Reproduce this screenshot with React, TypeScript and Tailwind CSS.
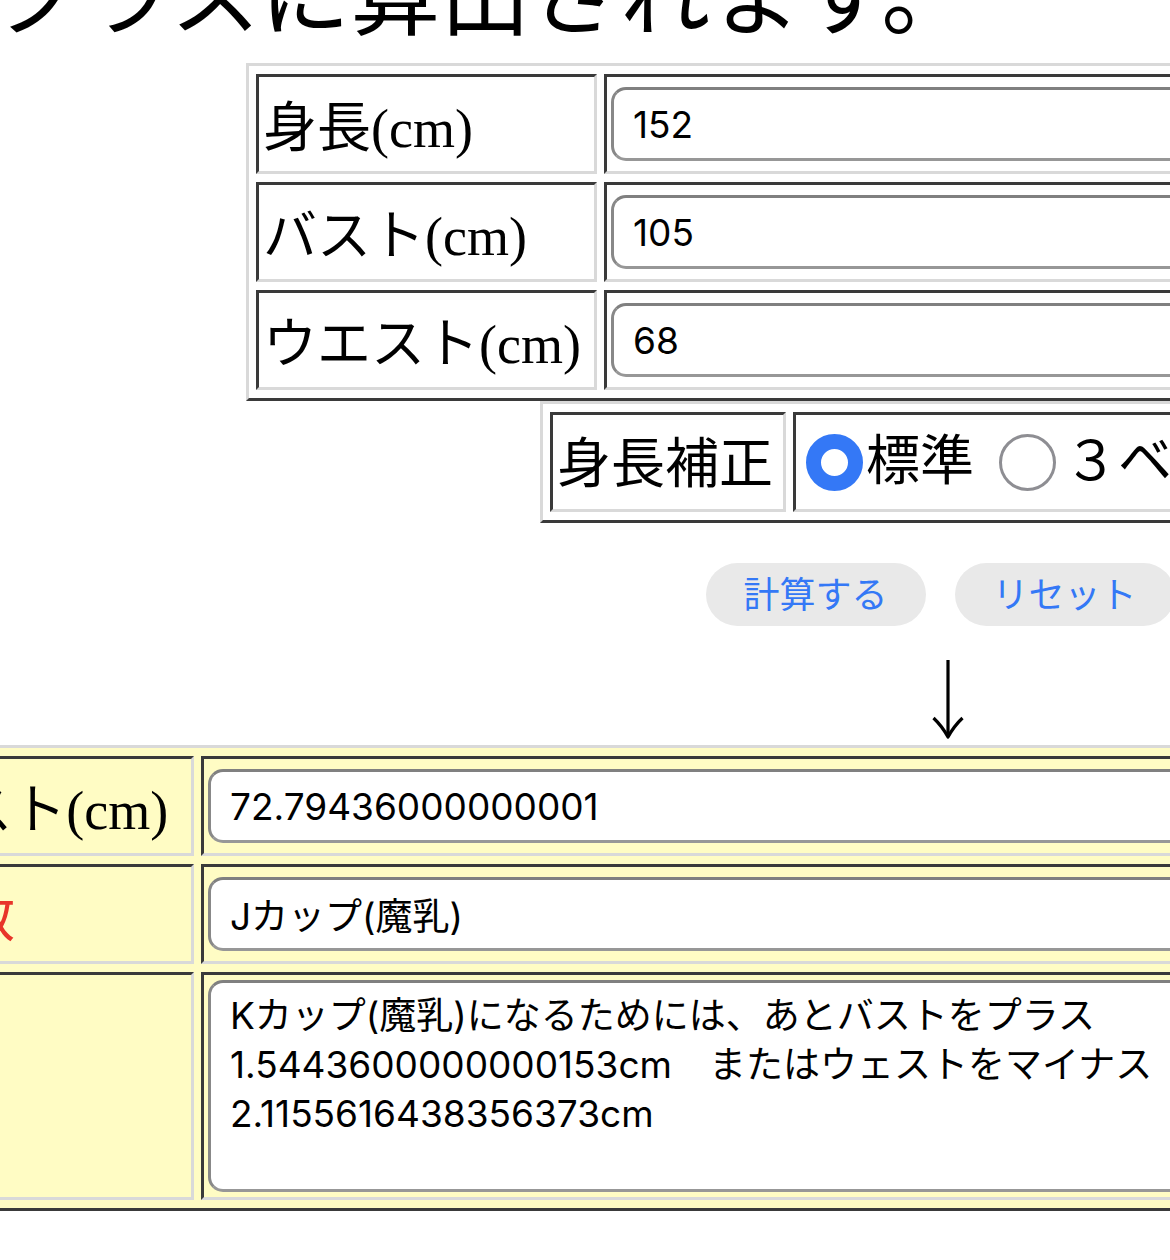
import React from "react";

const serif = "font-['Liberation_Serif','Noto_Sans_CJK_JP',serif]";
const sans = "font-['Inter','Noto_Sans_CJK_JP',sans-serif]";

// old-school table border="1" look: outset frame, inset cells
const frame =
  "table-fixed border-separate border-spacing-x-[7px] border-spacing-y-[8px] border-[3px] border-t-[#d9d9d9] border-l-[#d9d9d9] border-r-[#3a3a3a] border-b-[#3a3a3a]";
const cell =
  "border-[3px] border-t-[#3a3a3a] border-l-[#3a3a3a] border-r-[#d9d9d9] border-b-[#d9d9d9] p-[4px] align-middle";
const labelCell = "whitespace-nowrap pt-[13px] text-[54px] leading-none";
const field =
  "block w-full rounded-[15px] border-[3px] border-[#979797] border-t-[#808080] border-l-[#888888] bg-white pl-[19px] text-[37px] text-black outline-none";

const inputs = [
  ["身長(cm)", "152"],
  ["バスト(cm)", "105"],
  ["ウエスト(cm)", "68"],
];

const advice =
  "Kカップ(魔乳)になるためには、あとバストをプラス\n1.5443600000000153cm　またはウェストをマイナス\n2.1155616438356373cm";

export default function App() {
  return (
    <div className="relative h-[1260px] w-[1170px] overflow-hidden bg-white text-black">
      <div className="flex w-[1880px] flex-col items-center">
        {/* heading, only its last line is in view */}
        <p className={`-ml-[8px] -mt-[47px] self-start whitespace-nowrap text-[90px] leading-[90px] ${serif}`}>
          クラスに算出されます。
        </p>

        {/* Inputs */}
        <table className={`${frame} mt-[20px] w-[1388px] bg-white`}>
          <tbody>
            {inputs.map(([label, value]) => (
              <tr key={label}>
                <td className={`${cell} ${labelCell} h-[100px] w-[341px] ${serif}`}>{label}</td>
                <td className={`${cell} h-[100px]`}>
                  <input readOnly value={value} className={`${field} h-[74px] ${sans}`} />
                </td>
              </tr>
            ))}
          </tbody>
        </table>

        {/* Height correction */}
        <table className={`${frame} w-[800px] bg-white`}>
          <tbody>
            <tr>
              <td className={`${cell} h-[100px] w-[236px] whitespace-nowrap pt-[10px] text-[54px] leading-none ${serif}`}>
                身長補正
              </td>
              <td className={`${cell} h-[100px]`}>
                <div className={`flex items-center whitespace-nowrap text-[54px] leading-none ${serif}`}>
                  <span className="ml-[6px] mr-[3px] h-[57px] w-[57px] shrink-0 rounded-full border-[15px] border-[#3478f6] bg-white" />
                  <span>標準</span>
                  <span className="ml-[25px] mr-[8px] h-[57px] w-[57px] shrink-0 rounded-full border-[3px] border-[#8e8e93] bg-white" />
                  <span>３ベース</span>
                </div>
              </td>
            </tr>
          </tbody>
        </table>

        <div className={`mt-[40px] flex gap-[29px] ${sans}`}>
          <button className="h-[63px] w-[220px] rounded-full bg-[#e9e9e9] text-[36px] text-[#3478f6]">
            計算する
          </button>
          <button className="h-[63px] w-[220px] rounded-full bg-[#e9e9e9] text-[36px] text-[#3478f6]">
            リセット
          </button>
        </div>

        <svg className="ml-[15px] mt-[34px]" width="32" height="79" viewBox="0 0 32 79" fill="none" stroke="black" strokeWidth="3.2">
          <line x1="16" y1="0" x2="16" y2="77" />
          <path d="M1.5 58 Q10 66 16 77 Q22 66 30.5 58" strokeLinejoin="round" />
        </svg>

        {/* Results */}
        <table className={`${frame} mt-[6px] w-[2532px] bg-[#fffcc4]`}>
          <tbody>
            <tr>
              <td className={`${cell} ${labelCell} h-[100px] w-[510px] ${serif}`}>アンダーバスト(cm)</td>
              <td className={`${cell} h-[100px]`}>
                <input readOnly value="72.79436000000001" className={`${field} h-[74px] ${sans}`} />
              </td>
            </tr>
            <tr>
              <td className={`${cell} ${labelCell} h-[100px] text-[#e8352a] ${serif}`}>推定カップ数</td>
              <td className={`${cell} h-[100px]`}>
                <input readOnly value="Jカップ(魔乳)" className={`${field} h-[74px] ${sans}`} />
              </td>
            </tr>
            <tr>
              <td className={`${cell} h-[228px]`} />
              <td className={`${cell} h-[228px]`}>
                <textarea
                  readOnly
                  value={advice}
                  className={`${field} h-[212px] resize-none overflow-hidden whitespace-pre pt-[8px] leading-[49px] ${sans}`}
                />
              </td>
            </tr>
          </tbody>
        </table>
      </div>
    </div>
  );
}
